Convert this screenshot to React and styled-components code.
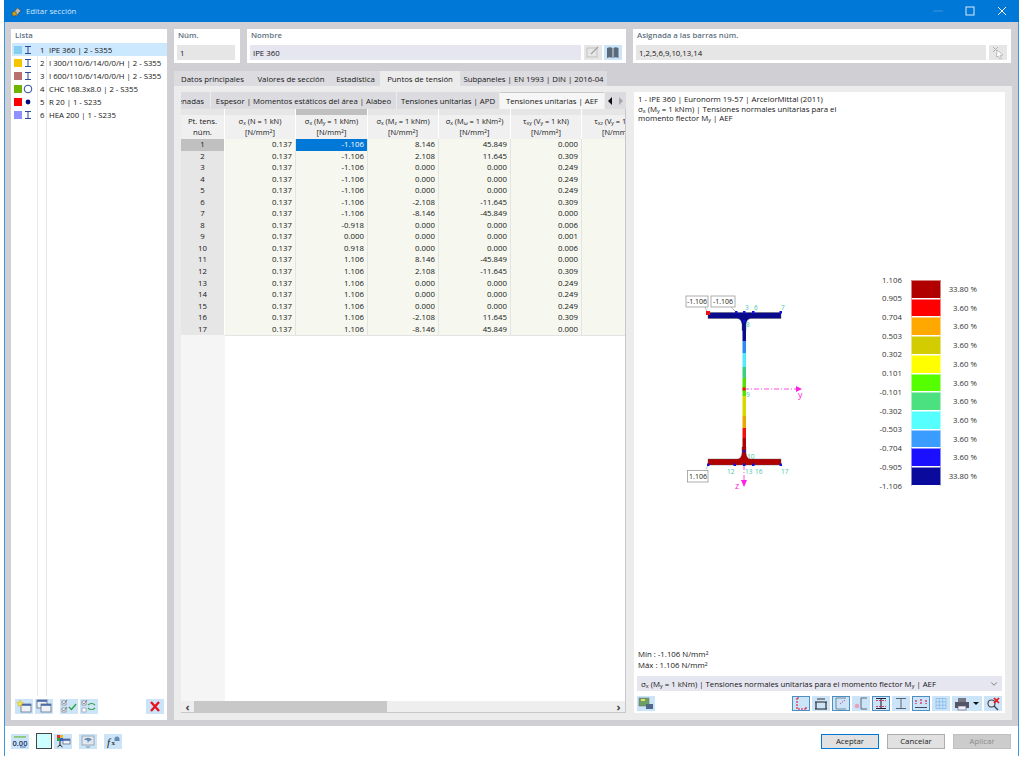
import React from 'react';
import styled, { createGlobalStyle } from 'styled-components';
import { ChevronDown } from 'lucide-react';

const GlobalStyle = createGlobalStyle`
  html, body {
    margin: 0;
    padding: 0;
    background: #fff;
    overflow: hidden;
  }
  * { box-sizing: border-box; }
  body {
    font-family: "Open Sans", "Noto Sans", sans-serif;
    font-size: 7.8px;
    color: #151515;
  }
`;

const listItems = [
  { color: '#87cff0', shape: 'i', label: 'IPE 360 | 2 - S355' },
  { color: '#f7c400', shape: 'i', label: 'I 300/110/6/14/0/0/H | 2 - S355' },
  { color: '#b87070', shape: 'i', label: 'I 600/110/6/14/0/0/H | 2 - S355' },
  { color: '#6fb400', shape: 'o', label: 'CHC 168.3x8.0 | 2 - S355' },
  { color: '#ff0000', shape: 'dot', label: 'R 20 | 1 - S235' },
  { color: '#9090ff', shape: 'i', label: 'HEA 200 | 1 - S235' },
];

const col2 = ['-1.106', '-1.106', '-1.106', '-1.106', '-1.106', '-1.106', '-1.106', '-0.918', '0.000', '0.918', '1.106', '1.106', '1.106', '1.106', '1.106', '1.106', '1.106'];
const col3 = ['8.146', '2.108', '0.000', '0.000', '0.000', '-2.108', '-8.146', '0.000', '0.000', '0.000', '8.146', '2.108', '0.000', '0.000', '0.000', '-2.108', '-8.146'];
const col4 = ['45.849', '11.645', '0.000', '0.000', '0.000', '-11.645', '-45.849', '0.000', '0.000', '0.000', '-45.849', '-11.645', '0.000', '0.000', '0.000', '11.645', '45.849'];
const col5 = ['0.000', '0.309', '0.249', '0.249', '0.249', '0.309', '0.000', '0.006', '0.001', '0.006', '0.000', '0.309', '0.249', '0.249', '0.249', '0.309', '0.000'];

const legend = [
  ['1.106', '#b00000', '33.80 %'],
  ['0.905', '#ff0000', '3.60 %'],
  ['0.704', '#ffa800', '3.60 %'],
  ['0.503', '#d2cc00', '3.60 %'],
  ['0.302', '#ffff00', '3.60 %'],
  ['0.101', '#55ff00', '3.60 %'],
  ['-0.101', '#4be080', '3.60 %'],
  ['-0.302', '#55ffff', '3.60 %'],
  ['-0.503', '#3a9cff', '3.60 %'],
  ['-0.704', '#1a10ff', '3.60 %'],
  ['-0.905', '#0a0a9c', '33.80 %'],
];

const ProfileIcon = ({ shape }) => (
  <svg width="10" height="10" viewBox="0 0 10 10">
    {shape === 'i' && <path d="M2 1.5h6M2 8.5h6M5 1.5v7" stroke="#2a4a9a" strokeWidth="1" fill="none" />}
    {shape === 'o' && <circle cx="5" cy="5" r="3.8" stroke="#2a4a9a" strokeWidth="1" fill="none" />}
    {shape === 'dot' && <circle cx="5" cy="5" r="2.4" fill="#000c7a" />}
  </svg>
);

const Win = ({ x = 3, y = 3, w = 11, h = 8 }) => (
  <g>
    <rect x={x} y={y} width={w} height={h} fill="#eef2f6" stroke="#50607a" strokeWidth="0.7" />
    <rect x={x} y={y} width={w} height="1.8" fill="#4a6aa8" />
  </g>
);

const icons = {
  add: <><Win x={6} y={5} w={10} h={8} /><path d="M5 1l1 2.200 2.200.3-1.600 1.600.4 2.300L5 6.300 3 7.400l.4-2.300L1.800 3.500 4 3.200z" fill="#f6e14a" stroke="#c9a800" strokeWidth="0.4" /></>,
  copy: <><Win x={2} y={1} w={10} h={8} /><Win x={6} y={5} w={10} h={8} /></>,
  checks: <><rect x="2" y="2" width="4" height="4" fill="#fff" stroke="#667" strokeWidth="0.6" /><rect x="2" y="9" width="4" height="4" fill="#fff" stroke="#667" strokeWidth="0.6" /><path d="M2.500 3.500l1.500 1.500 3-4M2.500 10.500l1.500 1.500 3-4" stroke="#445" fill="none" strokeWidth="0.6" /><path d="M9 8l2.500 2.500L16 5" stroke="#2aa040" fill="none" strokeWidth="1.300" /></>,
  toggle: <><rect x="2" y="2" width="4" height="4" fill="#fff" stroke="#667" strokeWidth="0.6" /><rect x="2" y="9" width="4" height="4" fill="#fff" stroke="#889" strokeWidth="0.6" /><path d="M2.500 3.500l1.500 1.500 3-4" stroke="#445" fill="none" strokeWidth="0.6" /><path d="M8 6c2-2 5-2 7 0M15 9c-2 2-5 2-7 0" stroke="#2aa040" fill="none" strokeWidth="1.100" /></>,
  remove: <path d="M5 3l8 9M13 3l-8 9" stroke="#e8101a" strokeWidth="2.300" />,
  value: <><rect x="3" y="2" width="12" height="1.800" fill="#8cc87a" /><text x="9" y="11.500" fontSize="7.500" fontWeight="600" textAnchor="middle" fill="#20306a">0.00</text><path d="M9 13h6" stroke="#2a4a9a" strokeWidth="0.7" /></>,
  colors: <><rect x="3" y="1" width="3" height="3" fill="#e03030" /><rect x="6" y="1" width="3" height="3" fill="#e0c030" /><rect x="3" y="4" width="3" height="3" fill="#30a040" /><rect x="6" y="4" width="3" height="3" fill="#3060d0" /><path d="M6 7v4M3.500 13l2.500-2 2.500 2" stroke="#222" strokeWidth="1" fill="none" /><Win x={9} y={5} w={7} h={5} /></>,
  screen: <><rect x="3" y="2" width="12" height="9" fill="#dfe8f0" stroke="#8090a0" strokeWidth="0.7" /><path d="M5 6c2-3 6-3 8 0l-3 1-1 2-1-3z" fill="#6a8ab0" /><path d="M7 13h4" stroke="#8090a0" strokeWidth="1" /></>,
  fx: <><text x="3" y="12" fontSize="11" fontStyle="italic" fontFamily="Liberation Serif, serif" fill="#222">f</text><text x="7.500" y="11" fontSize="7" fontWeight="700" fontFamily="Liberation Serif, serif" fill="#333">x</text><path d="M10.500 5a2.500 2.500 0 1 1 5 0v2h-5z" fill="#6a8ab0" /></>,
  image: <><rect x="2" y="2" width="10" height="8" fill="#6ca060" stroke="#667" strokeWidth="0.5" /><rect x="4" y="3" width="4" height="2" fill="#e8e060" /><rect x="9" y="8" width="7" height="5" fill="#50688a" /></>,
  edit: <><rect x="3" y="3" width="10" height="9" fill="none" stroke="#b8b8b8" strokeWidth="0.8" /><path d="M7 9l7-7" stroke="#a0a0a0" strokeWidth="1.100" /></>,
  book: <path d="M3 3c2-1 4-1 5.500 0v10C7 12 5 12 3 13zM14.500 3c-2-1-4-1-5 0v10c1-1 3-1 5 0z" fill="#5a6a78" />,
  pick: <><path d="M4 2l5 5M9 2L4 7" stroke="#b0b0b0" strokeWidth="1" /><path d="M8 5l6 5-3 .5 1.500 3-1.500.5-1.500-3L7.500 12z" fill="#fff" stroke="#a8a8a8" strokeWidth="0.7" /></>,
  secL: <path d="M5 2v11h9M5 2h2M14 13v-2" stroke="#d81840" strokeWidth="1.100" strokeDasharray="2 1" fill="none" />,
  secDim: <><path d="M3 6h12M3 13h12M4 6v7M14 6v7" stroke="#222" strokeWidth="1.100" fill="none" /><path d="M5 3h8" stroke="#222" strokeWidth="0.9" /></>,
  secAxes: <><path d="M4 2h10M4 13h10M4 2v11" stroke="#607088" strokeWidth="0.8" fill="none" /><path d="M8 8l5-4" stroke="#d83880" strokeWidth="0.9" strokeDasharray="1.500 1" /></>,
  secPts: <><path d="M9 2h6M9 13h6M9 2v11" stroke="#445" strokeWidth="0.8" fill="none" /><circle cx="5" cy="10" r="2.300" fill="#e8a0bc" /></>,
  secIRed: <><path d="M4 2.500h10M4 12.500h10M9 2.500v10" stroke="#223" strokeWidth="1.100" fill="none" /><path d="M4 4.500h10M4 10.500h10" stroke="#d81840" strokeWidth="0.8" strokeDasharray="2 1" /></>,
  secI: <path d="M4 2.500h10M4 12.500h10M9 2.500v10" stroke="#445" strokeWidth="0.8" fill="none" />,
  secDots: <><path d="M3 11.500h12" stroke="#223" strokeWidth="0.8" /><path d="M4 4v4M9 3v5M14 4v4" stroke="#d81840" strokeWidth="1.200" strokeDasharray="2 1" /></>,
  grid: <path d="M4 2.500h10v10H4zM4 5.800h10M4 9.200h10M7.300 2.500v10M10.700 2.500v10" stroke="#78b4e8" strokeWidth="0.7" fill="none" />,
  magnify: <><circle cx="7.500" cy="7.500" r="3.500" fill="#dfe8f0" stroke="#404858" strokeWidth="1.200" /><path d="M10 10l4 4" stroke="#404858" strokeWidth="1.500" /><path d="M10 2l5 5M15 2l-5 5" stroke="#e8101a" strokeWidth="1.700" /></>,
};

const Section = () => (
  <svg width="130" height="210" viewBox="680 290 130 210">
    <g fontFamily="Open Sans, sans-serif" fontSize="6.5">
      <path d="M708 312.500h73v6h-30c-3 0-4.500 2-5 6v6h-4v-6c-.5-4-2-6-5-6h-29z" fill="#0a0a8c" stroke="#555" strokeWidth="0.4" />
      <path d="M708 465v-6h29c3 0 4.500-2 5-6v-6h4v6c.5 4 2 6 5 6h30v6z" fill="#b00000" stroke="#555" strokeWidth="0.4" />
      <rect x="742.500" y="330" width="3.500" height="11" fill="#0a0a8c" />
      <rect x="742.500" y="341" width="3.500" height="12" fill="#2a8cf0" />
      <rect x="742.500" y="353" width="3.500" height="14" fill="#55e8ff" />
      <rect x="742.500" y="367" width="3.500" height="11" fill="#38d080" />
      <rect x="742.500" y="378" width="3.500" height="18" fill="#55e000" />
      <rect x="742.500" y="396" width="3.500" height="20" fill="#d8d800" />
      <rect x="742.500" y="416" width="3.500" height="12" fill="#e8a800" />
      <rect x="742.500" y="428" width="3.500" height="10" fill="#f01010" />
      <rect x="742.500" y="438" width="3.500" height="10" fill="#b00000" />

      <path d="M744 389h53" stroke="#ff20e0" strokeWidth="0.8" strokeDasharray="5 2 1 2" />
      <path d="M796 386l6 3-6 3z" fill="#ff20e0" />
      <text x="798" y="398" fontSize="9" fill="#ff20e0">y</text>
      <path d="M744 465v17" stroke="#ff20e0" strokeWidth="0.8" strokeDasharray="5 2 1 2" />
      <path d="M741 480h6l-3 7z" fill="#ff20e0" />
      <text x="735" y="489" fontSize="9" fill="#ff20e0">z</text>

      <g fill="#1010e0">
        <rect x="735" y="311" width="2.500" height="2.500" />
        <rect x="743" y="311" width="2.500" height="2.500" />
        <rect x="752" y="311" width="2.500" height="2.500" />
        <rect x="779.500" y="311" width="2.500" height="2.500" />
        <rect x="743" y="320" width="2.500" height="2.500" />
        <rect x="743" y="450" width="2.500" height="2.500" />
        <rect x="707" y="463.500" width="2.500" height="2.500" />
        <rect x="733.500" y="463.500" width="2.500" height="2.500" />
        <rect x="743" y="463.500" width="2.500" height="2.500" />
        <rect x="752" y="463.500" width="2.500" height="2.500" />
        <rect x="779.500" y="463.500" width="2.500" height="2.500" />
      </g>
      <rect x="706" y="311" width="4" height="4" fill="#f01010" />
      <rect x="742.500" y="387.500" width="3" height="3" fill="#f01010" />

      <g fill="#45c8b0">
        <text x="745" y="310">3</text>
        <text x="754" y="310">6</text>
        <text x="781" y="310">7</text>
        <text x="746" y="327">8</text>
        <text x="746" y="397">9</text>
        <text x="747" y="459">10</text>
        <text x="727" y="474">12</text>
        <text x="745" y="474">13</text>
        <text x="755" y="474">16</text>
        <text x="781" y="474">17</text>
      </g>

      <path d="M705 307l2 4M731 307l4 4M706 469l2-3" stroke="#888" strokeWidth="0.6" />
      <g fill="#fff" stroke="#999" strokeWidth="0.8">
        <rect x="686" y="296" width="22" height="11" />
        <rect x="711" y="296" width="24" height="11" />
        <rect x="687.500" y="470.500" width="20.500" height="11.500" />
      </g>
      <g fill="#222" textAnchor="middle" fontSize="7">
        <text x="697" y="304">-1.106</text>
        <text x="723" y="304">-1.106</text>
        <text x="698" y="479">1.106</text>
      </g>
    </g>
  </svg>
);

export default function App() {
  return (
    <>
      <GlobalStyle />
      <Window>
        <TitleBar>
          <svg width="11" height="11" viewBox="0 0 12 12">
            <path d="M1 9l6-7 4 3-5 6z" fill="#b8b8b0" stroke="#333" strokeWidth="0.6" />
            <circle cx="3.500" cy="8.500" r="2.500" fill="#c8a020" stroke="#444" strokeWidth="0.6" />
          </svg>
          <TitleText>Editar sección</TitleText>
          <WinControls>
            <WinButton><svg width="10" height="10"><path d="M0 5h10" stroke="#3d96de" /></svg></WinButton>
            <WinButton><svg width="10" height="10"><rect x="1" y="1" width="8" height="8" fill="none" stroke="#dbeafa" /></svg></WinButton>
            <WinButton><svg width="10" height="10"><path d="M1 1l8 8M9 1l-8 8" stroke="#fff" /></svg></WinButton>
          </WinControls>
        </TitleBar>

        <Client>
          <ListPanel>
            <PanelLabel>Lista</PanelLabel>
            <ListBody>
              {listItems.map((item, i) => (
                <ListRow key={i} $selected={i === 0}>
                  <Swatch $color={item.color} />
                  <ProfileCell><ProfileIcon shape={item.shape} /></ProfileCell>
                  <ListNum>{i + 1}</ListNum>
                  <ListText>{item.label}</ListText>
                </ListRow>
              ))}
            </ListBody>
            <ListToolbar>
              <IconBtn>{icons.add}</IconBtn>
              <IconBtn>{icons.copy}</IconBtn>
              <ToolGap />
              <IconBtn>{icons.checks}</IconBtn>
              <IconBtn>{icons.toggle}</IconBtn>
              <Spacer />
              <IconBtn>{icons.remove}</IconBtn>
            </ListToolbar>
          </ListPanel>

          <MainColumn>
            <TopRow>
              <FieldPanel $width={66}>
                <PanelLabel>Núm.</PanelLabel>
                <FieldRow><Input>1</Input></FieldRow>
              </FieldPanel>
              <FieldPanel $width={379}>
                <PanelLabel>Nombre</PanelLabel>
                <FieldRow>
                  <Input $tint>IPE 360</Input>
                  <IconBtn $muted>{icons.edit}</IconBtn>
                  <IconBtn>{icons.book}</IconBtn>
                </FieldRow>
              </FieldPanel>
              <FieldPanel $width={378}>
                <PanelLabel>Asignada a las barras núm.</PanelLabel>
                <FieldRow>
                  <Input>1,2,5,6,9,10,13,14</Input>
                  <IconBtn $muted>{icons.pick}</IconBtn>
                </FieldRow>
              </FieldPanel>
            </TopRow>

            <Tabs>
              <Tab $width={77}>Datos principales</Tab>
              <Tab $width={80}>Valores de sección</Tab>
              <Tab $width={49}>Estadística</Tab>
              <Tab $width={80} $active>Puntos de tensión</Tab>
              <Tab $width={147}>Subpaneles | EN 1993 | DIN | 2016-04</Tab>
            </Tabs>

            <TabBody>
              <TableColumn>
                <InnerTabs>
                  <InnerTab $width={29} $clip>Coordenadas</InnerTab>
                  <InnerTab $width={185}>Espesor | Momentos estáticos del área | Alabeo</InnerTab>
                  <InnerTab $width={102}>Tensiones unitarias | APD</InnerTab>
                  <InnerTab $width={104} $active>Tensiones unitarias | AEF</InnerTab>
                  <TabArrows><ArrowLeft /><ArrowRight /></TabArrows>
                </InnerTabs>
                <TableFrame>
                  <GridArea>
                    <BandRow>
                      <Band />
                      <Band />
                      <Band $dark />
                      <Band />
                      <Band />
                      <Band />
                      <Band />
                    </BandRow>
                    <HeaderRow>
                      <HeadCell>Pt. tens.<br />núm.</HeadCell>
                      <HeadCell $thin>σ<Sub>x</Sub> (N = 1 kN)<br />[N/mm<Sup>2</Sup>]</HeadCell>
                      <HeadCell $thin>σ<Sub>x</Sub> (M<Sub>y</Sub> = 1 kNm)<br />[N/mm<Sup>2</Sup>]</HeadCell>
                      <HeadCell $thin>σ<Sub>x</Sub> (M<Sub>z</Sub> = 1 kNm)<br />[N/mm<Sup>2</Sup>]</HeadCell>
                      <HeadCell $thin>σ<Sub>x</Sub> (M<Sub>ω</Sub> = 1 kNm<Sup>2</Sup>)<br />[N/mm<Sup>2</Sup>]</HeadCell>
                      <HeadCell $thin>τ<Sub>xy</Sub> (V<Sub>y</Sub> = 1 kN)<br />[N/mm<Sup>2</Sup>]</HeadCell>
                      <HeadCell $thin>τ<Sub>xz</Sub> (V<Sub>y</Sub> = 1 kN)<br />[N/mm<Sup>2</Sup>]</HeadCell>
                    </HeaderRow>
                    {col2.map((value, i) => (
                      <DataRow key={i}>
                        <IndexCell $current={i === 0}>{i + 1}</IndexCell>
                        <ValueCell>0.137</ValueCell>
                        <ValueCell $selected={i === 0}>{value}</ValueCell>
                        <ValueCell>{col3[i]}</ValueCell>
                        <ValueCell>{col4[i]}</ValueCell>
                        <ValueCell>{col5[i]}</ValueCell>
                        <ValueCell />
                      </DataRow>
                    ))}
                    <FillerRow><IndexFiller /></FillerRow>
                  </GridArea>
                  <ScrollBar>
                    <ScrollArrow>‹</ScrollArrow>
                    <ScrollThumb />
                    <Spacer />
                    <ScrollArrow>›</ScrollArrow>
                  </ScrollBar>
                </TableFrame>
              </TableColumn>

              <ResultPanel>
                <ResultHead>
                  <div>1 - IPE 360 | Euronorm 19-57 | ArcelorMittal (2011)</div>
                  <div>σ<Sub>x</Sub> (M<Sub>y</Sub> = 1 kNm) | Tensiones normales unitarias para el</div>
                  <div>momento flector M<Sub>y</Sub> | AEF</div>
                </ResultHead>
                <Drawing>
                  <Section />
                  <Legend>
                    <LegendValues>
                      {legend.map(([value]) => <LegendValue key={value}>{value}</LegendValue>)}
                      <LegendValue>-1.106</LegendValue>
                    </LegendValues>
                    <LegendBars>
                      {legend.map(([value, color]) => <LegendBar key={value} $color={color} />)}
                    </LegendBars>
                    <LegendPercents>
                      {legend.map(([value, , pct]) => <LegendValue key={value}>{pct}</LegendValue>)}
                    </LegendPercents>
                  </Legend>
                </Drawing>
                <MinMax>
                  <div>Mín : -1.106 N/mm<Sup>2</Sup></div>
                  <div>Máx :  1.106 N/mm<Sup>2</Sup></div>
                </MinMax>
                <Select>
                  <span>σ<Sub>x</Sub> (M<Sub>y</Sub> = 1 kNm) | Tensiones normales unitarias para el momento flector M<Sub>y</Sub> | AEF</span>
                  <ChevronDown size={10} color="#666" />
                </Select>
                <ResultToolbar>
                  <IconBtn>{icons.image}</IconBtn>
                  <Spacer />
                  <IconBtn $active>{icons.secL}</IconBtn>
                  <IconBtn>{icons.secDim}</IconBtn>
                  <IconBtn $active>{icons.secAxes}</IconBtn>
                  <IconBtn>{icons.secPts}</IconBtn>
                  <IconBtn $active>{icons.secIRed}</IconBtn>
                  <IconBtn>{icons.secI}</IconBtn>
                  <IconBtn $active>{icons.secDots}</IconBtn>
                  <IconBtn>{icons.grid}</IconBtn>
                  <PrintBtn>
                    <svg width="30" height="15" viewBox="0 0 30 15">
                      <rect x="3" y="6" width="14" height="6" fill="#556" />
                      <rect x="6" y="2" width="8" height="4" fill="#778" />
                      <rect x="6" y="10" width="8" height="4" fill="#eef" stroke="#556" strokeWidth="0.6" />
                      <path d="M21 6h6l-3 3z" fill="#111" />
                    </svg>
                  </PrintBtn>
                  <IconBtn>{icons.magnify}</IconBtn>
                </ResultToolbar>
              </ResultPanel>
            </TabBody>
          </MainColumn>
        </Client>

        <Footer>
          <IconBtn>{icons.value}</IconBtn>
          <ColorBox />
          <IconBtn>{icons.colors}</IconBtn>
          <IconBtn $gap>{icons.screen}</IconBtn>
          <IconBtn $gap>{icons.fx}</IconBtn>
          <Spacer />
          <DialogButton $primary>Aceptar</DialogButton>
          <DialogButton>Cancelar</DialogButton>
          <DialogButton $disabled>Aplicar</DialogButton>
        </Footer>
      </Window>
    </>
  );
}

const IconBtn = ({ children, $active, $muted, $gap }) => (
  <IconFrame $active={$active} $muted={$muted} $gap={$gap}>
    <svg width="18" height="15" viewBox="0 0 18 15">{children}</svg>
  </IconFrame>
);

const Window = styled.div`
  margin-left: 4px;
  width: 1015px;
  height: 756px;
  display: flex;
  flex-direction: column;
  border: 1px solid #3a96dd;
  border-top: none;
`;

const TitleBar = styled.div`
  height: 22px;
  margin: 0 -1px;
  padding-left: 7px;
  flex: none;
  display: flex;
  align-items: center;
  background: #0078d7;
`;

const TitleText = styled.div`
  margin-left: 4px;
  color: #d4e6f6;
`;

const WinControls = styled.div`
  margin-left: auto;
  display: flex;
  padding-right: 12px;
  gap: 22px;
`;

const WinButton = styled.div`
  width: 10px;
  height: 10px;
  display: flex;
`;

const Client = styled.div`
  height: 704px;
  flex: none;
  display: flex;
  gap: 7px;
  padding: 7px 6px 6px;
  background: #d0d0d4;
`;

const ListPanel = styled.div`
  width: 156px;
  flex: none;
  display: flex;
  flex-direction: column;
  background: #fff;
`;

const PanelLabel = styled.div`
  height: 14px;
  padding: 1px 0 0 4px;
  font-weight: 600;
  color: #5d7080;
`;

const ListBody = styled.div`
  flex: 1;
  margin-left: 1px;
  background:
    linear-gradient(#e8e8e8, #e8e8e8) 25px 0 / 1px 100% no-repeat,
    linear-gradient(#e8e8e8, #e8e8e8) 34px 0 / 1px 100% no-repeat;
`;

const ListRow = styled.div`
  height: 13px;
  display: flex;
  align-items: center;
  background: ${p => (p.$selected ? '#cce8ff' : 'transparent')};
`;

const Swatch = styled.div`
  width: 8px;
  height: 8px;
  margin-left: 2px;
  background: ${p => p.$color};
`;

const ProfileCell = styled.div`
  width: 10px;
  height: 10px;
  margin-left: 1px;
  display: flex;
`;

const ListNum = styled.div`
  width: 9px;
  margin-left: 7px;
`;

const ListText = styled.span`
  letter-spacing: -0.03px;
`;

const ListToolbar = styled.div`
  flex: none;
  height: 24px;
  display: flex;
  align-items: flex-start;
  gap: 2px;
  padding: 3px 3px 0 4px;
`;

const ToolGap = styled.div`
  width: 3px;
`;

const Spacer = styled.div`
  flex: 1;
`;

const IconFrame = styled.div`
  width: 18px;
  height: 15px;
  flex: none;
  display: flex;
  margin-left: ${p => (p.$gap ? '5px' : '0')};
  background: ${p => (p.$muted ? '#e6e6e6' : '#cce4f7')};
  outline: ${p => (p.$active ? '1px solid #4d8fc0' : 'none')};
  outline-offset: -1px;
`;

const MainColumn = styled.div`
  flex: 1;
  min-width: 0;
  display: flex;
  flex-direction: column;
`;

const TopRow = styled.div`
  flex: none;
  height: 34px;
  display: flex;
  gap: 7px;
  margin-bottom: 8px;
`;

const FieldPanel = styled.div`
  width: ${p => p.$width}px;
  background: #fff;
`;

const FieldRow = styled.div`
  display: flex;
  gap: 2px;
  padding: 2px 4px 0 3px;
`;

const Input = styled.div`
  flex: 1;
  height: 15px;
  margin-right: 1px;
  padding: 0 3px;
  display: flex;
  align-items: center;
  background: ${p => (p.$tint ? '#e6e6f0' : '#e6e6e6')};
`;

const Tabs = styled.div`
  flex: none;
  height: 15px;
  display: flex;
`;

const Tab = styled.div`
  width: ${p => p.$width}px;
  display: flex;
  align-items: center;
  justify-content: center;
  white-space: nowrap;
  background: ${p => (p.$active ? '#ececec' : '#dcdce0')};
`;

const TabBody = styled.div`
  flex: 1;
  min-height: 0;
  display: flex;
  gap: 8px;
  padding: 6px 7px 7px;
  background: #ececec;
`;

const TableColumn = styled.div`
  width: 445px;
  flex: none;
  display: flex;
  flex-direction: column;
`;

const InnerTabs = styled.div`
  flex: none;
  height: 17px;
  display: flex;
  gap: 1px;
`;

const InnerTab = styled.div`
  width: ${p => p.$width}px;
  flex: none;
  display: flex;
  align-items: center;
  justify-content: ${p => (p.$clip ? 'flex-end' : 'center')};
  padding-right: ${p => (p.$clip ? '6px' : '0')};
  overflow: hidden;
  white-space: nowrap;
  background: ${p => (p.$active ? '#f6f6f6' : '#dcdce0')};
  border-top: ${p => (p.$active ? '1px solid #c8c8c8' : 'none')};
`;

const TabArrows = styled.div`
  flex: 1;
  display: flex;
  align-items: center;
  justify-content: center;
  gap: 7px;
  background: #dcdce0;
`;

const ArrowLeft = styled.div`
  border: 4px solid transparent;
  border-left: none;
  border-right: 4px solid #111;
`;

const ArrowRight = styled.div`
  border: 4px solid transparent;
  border-right: none;
  border-left: 4px solid #a8a8a8;
`;

const TableFrame = styled.div`
  flex: 1;
  min-height: 0;
  display: flex;
  flex-direction: column;
  border-right: 1px solid #c8c8cc;
  border-bottom: 1px solid #c8c8cc;
  overflow: hidden;
  background: #fff;
`;

const GridArea = styled.div`
  flex: 1;
  min-height: 0;
  display: flex;
  flex-direction: column;
  overflow: hidden;
`;

const rowColumns = '44px 71px 72px 71px 72px 71px 71px';

const BandRow = styled.div`
  flex: none;
  height: 6px;
  display: grid;
  grid-template-columns: ${rowColumns};
  background: #fff;
`;

const Band = styled.div`
  margin-right: 1px;
  background: ${p => (p.$dark ? '#c0c0c0' : '#e6e6e6')};
`;

const HeaderRow = styled.div`
  flex: none;
  height: 24px;
  display: grid;
  grid-template-columns: ${rowColumns};
`;

const HeadCell = styled.div`
  text-align: center;
  font-size: ${p => (p.$thin ? '7.4px' : '7.8px')};
  line-height: 11px;
  padding-top: 1px;
  background: #f0f0f0;
  border-right: 1px solid #fff;
  white-space: nowrap;
  overflow: hidden;
`;

const Sub = styled.sub`
  font-size: 70%;
  line-height: 0;
  vertical-align: -0.2em;
`;

const Sup = styled.sup`
  font-size: 70%;
  line-height: 0;
  vertical-align: 0.4em;
`;

const DataRow = styled.div`
  flex: none;
  height: 11.56px;
  display: grid;
  grid-template-columns: ${rowColumns};
  line-height: 11.5px;
`;

const IndexCell = styled.div`
  text-align: center;
  background: ${p => (p.$current ? '#c0c0c0' : '#e6e6e6')};
  border-right: 1px solid #fff;
  border-bottom: 1px solid #f4f4f4;
`;

const ValueCell = styled.div`
  padding-right: 3px;
  text-align: right;
  color: ${p => (p.$selected ? '#fff' : '#151515')};
  background: ${p => (p.$selected ? '#0078d7' : '#f6f8f0')};
  border-right: 1px solid #e4e4e4;
  border-bottom: 1px solid #e4e4e4;
`;

const FillerRow = styled.div`
  flex: 1;
  display: flex;
`;

const IndexFiller = styled.div`
  width: 44px;
  background: #f5f5f5;
`;

const ScrollBar = styled.div`
  flex: none;
  height: 11px;
  display: flex;
  background: #eeeeee;
`;

const ScrollArrow = styled.div`
  width: 13px;
  display: flex;
  align-items: center;
  justify-content: center;
  font-size: 11px;
  font-weight: 700;
  line-height: 9px;
  color: #444;
`;

const ScrollThumb = styled.div`
  width: 193px;
  background: #c8c8c8;
`;

const ResultPanel = styled.div`
  width: 371px;
  flex: none;
  display: flex;
  flex-direction: column;
  padding: 3px 3px 2px 3px;
  background: #fff;
`;

const ResultHead = styled.div`
  flex: none;
  height: 29px;
  padding-left: 1px;
  line-height: 9.5px;
`;

const Drawing = styled.div`
  flex: 1;
  min-height: 0;
  display: flex;
  align-items: flex-start;
  padding: 166px 0 0 43px;
`;

const Legend = styled.div`
  display: flex;
  margin: -19.4px 0 0 50px;
  color: #333;
`;

const LegendValues = styled.div`
  width: 42px;
  text-align: right;
`;

const LegendValue = styled.div`
  height: 18.73px;
  line-height: 18.73px;
`;

const LegendBars = styled.div`
  width: 30px;
  margin-left: 9px;
  padding-top: 9.4px;
`;

const LegendBar = styled.div`
  height: 18.73px;
  background: ${p => p.$color};
  border: 1px solid rgba(255, 255, 255, 0.5);
  border-bottom: 1.5px solid #fff;
`;

const LegendPercents = styled.div`
  width: 36px;
  padding-top: 9.4px;
  text-align: right;
`;

const MinMax = styled.div`
  flex: none;
  height: 27px;
  padding-left: 1px;
  line-height: 11px;
`;

const Select = styled.div`
  flex: none;
  height: 15px;
  display: flex;
  align-items: center;
  justify-content: space-between;
  padding: 0 3px 0 4px;
  background: #e6e6f0;
`;

const ResultToolbar = styled.div`
  flex: none;
  height: 20px;
  display: flex;
  align-items: center;
  gap: 2px;
  padding-top: 5px;
`;

const PrintBtn = styled.div`
  width: 30px;
  height: 15px;
  display: flex;
  background: #cce4f7;
`;

const Footer = styled.div`
  flex: none;
  height: 30px;
  display: flex;
  align-items: center;
  gap: 2px;
  padding: 0 7px 0 6px;
  background: #fff;
`;

const ColorBox = styled.div`
  width: 16px;
  height: 16px;
  margin-left: 5px;
  background: #ccffff;
  border: 1px solid #444;
`;

const DialogButton = styled.div`
  width: 58px;
  height: 15px;
  margin-left: 6px;
  display: flex;
  align-items: center;
  justify-content: center;
  color: ${p => (p.$disabled ? '#8a8a8a' : '#222')};
  background: ${p => (p.$disabled ? '#cccccc' : '#e1e1e1')};
  border: ${p => (p.$primary ? '1.5px solid #0078d7' : '1px solid #adadad')};
  border-color: ${p => (p.$disabled ? '#bfbfbf' : '')};
`;
